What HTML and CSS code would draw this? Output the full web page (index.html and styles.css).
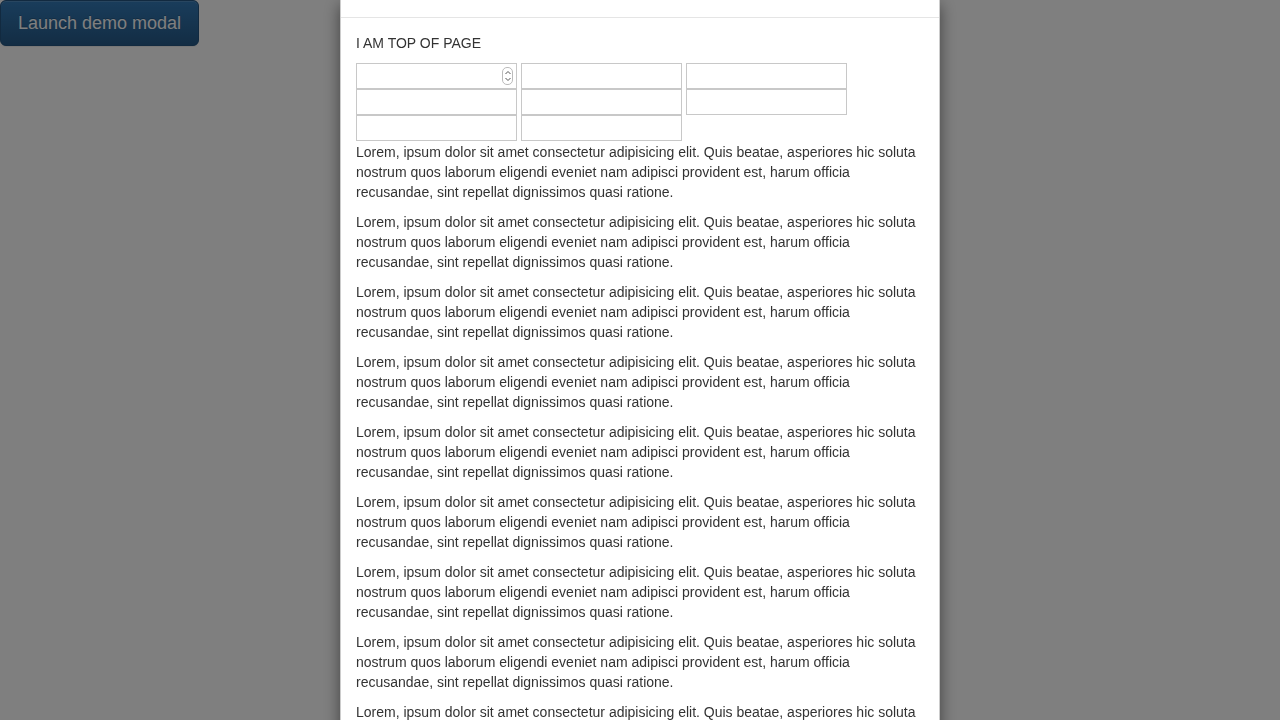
FILE: index.html
```html
<!DOCTYPE html>
<html lang="en">
<head>
<meta charset="utf-8">
<title>Modal demo</title>
<link rel="stylesheet" href="styles.css">
</head>
<body>
<button class="btn-launch" type="button">Launch demo modal</button>
<div class="backdrop"></div>
<div class="modal">
  <div class="modal-dialog">
    <div class="modal-content">
      <div class="modal-header"></div>
      <div class="modal-body">
        <p class="top">I AM TOP OF PAGE</p>
        <div class="fields">
          <div class="col">
            <div class="num-wrap">
              <input class="field" type="text">
              <span class="spin"><svg width="8" height="16" viewBox="0 0 8 16"><path d="M1.5 6 L4 3.5 L6.5 6" fill="none" stroke="#555" stroke-width="1"/><path d="M1.5 10 L4 12.5 L6.5 10" fill="none" stroke="#555" stroke-width="1"/></svg></span>
            </div>
            <input class="field" type="text">
            <input class="field" type="text">
          </div>
          <div class="col">
            <input class="field" type="text">
            <input class="field" type="text">
            <input class="field" type="text">
          </div>
          <div class="col">
            <input class="field" type="text">
            <input class="field" type="text">
          </div>
        </div>
        <p>Lorem, ipsum dolor sit amet consectetur adipisicing elit. Quis beatae, asperiores hic soluta nostrum quos laborum eligendi eveniet nam adipisci provident est, harum officia recusandae, sint repellat dignissimos quasi ratione.</p>
        <p>Lorem, ipsum dolor sit amet consectetur adipisicing elit. Quis beatae, asperiores hic soluta nostrum quos laborum eligendi eveniet nam adipisci provident est, harum officia recusandae, sint repellat dignissimos quasi ratione.</p>
        <p>Lorem, ipsum dolor sit amet consectetur adipisicing elit. Quis beatae, asperiores hic soluta nostrum quos laborum eligendi eveniet nam adipisci provident est, harum officia recusandae, sint repellat dignissimos quasi ratione.</p>
        <p>Lorem, ipsum dolor sit amet consectetur adipisicing elit. Quis beatae, asperiores hic soluta nostrum quos laborum eligendi eveniet nam adipisci provident est, harum officia recusandae, sint repellat dignissimos quasi ratione.</p>
        <p>Lorem, ipsum dolor sit amet consectetur adipisicing elit. Quis beatae, asperiores hic soluta nostrum quos laborum eligendi eveniet nam adipisci provident est, harum officia recusandae, sint repellat dignissimos quasi ratione.</p>
        <p>Lorem, ipsum dolor sit amet consectetur adipisicing elit. Quis beatae, asperiores hic soluta nostrum quos laborum eligendi eveniet nam adipisci provident est, harum officia recusandae, sint repellat dignissimos quasi ratione.</p>
        <p>Lorem, ipsum dolor sit amet consectetur adipisicing elit. Quis beatae, asperiores hic soluta nostrum quos laborum eligendi eveniet nam adipisci provident est, harum officia recusandae, sint repellat dignissimos quasi ratione.</p>
        <p>Lorem, ipsum dolor sit amet consectetur adipisicing elit. Quis beatae, asperiores hic soluta nostrum quos laborum eligendi eveniet nam adipisci provident est, harum officia recusandae, sint repellat dignissimos quasi ratione.</p>
        <p>Lorem, ipsum dolor sit amet consectetur adipisicing elit. Quis beatae, asperiores hic soluta nostrum quos laborum eligendi eveniet nam adipisci provident est, harum officia recusandae, sint repellat dignissimos quasi ratione.</p>
        <p>Lorem, ipsum dolor sit amet consectetur adipisicing elit. Quis beatae, asperiores hic soluta nostrum quos laborum eligendi eveniet nam adipisci provident est, harum officia recusandae, sint repellat dignissimos quasi ratione.</p>
      </div>
    </div>
  </div>
</div>
</body>
</html>
```

FILE: styles.css
```css
* { box-sizing: border-box; }
html, body {
  margin: 0;
  height: 100%;
  overflow: hidden;
}
body {
  font-family: "Liberation Sans", Arial, sans-serif;
  font-size: 14px;
  line-height: 20px;
  color: #333;
  background: #fff;
}
.btn-launch {
  display: block;
  margin: 0;
  width: 199px;
  height: 46px;
  padding: 10px 16px;
  font-family: "Liberation Sans", Arial, sans-serif;
  font-size: 18px;
  line-height: 24px;
  color: #fff;
  text-shadow: 0 -1px 0 rgba(0,0,0,.2);
  background-color: #2e6da4;
  background-image: linear-gradient(to bottom, #337ab7 0, #265a88 100%);
  border: 1px solid #245580;
  border-radius: 6px;
  box-shadow: inset 0 1px 0 rgba(255,255,255,.15), 0 1px 1px rgba(0,0,0,.075);
}
.backdrop {
  position: fixed;
  inset: 0;
  background: rgba(0,0,0,.5);
}
.modal {
  position: fixed;
  inset: 0;
  overflow: hidden;
}
.modal-dialog {
  width: 600px;
  margin: 0 auto;
}
.modal-content {
  background: #fff;
  border: 1px solid rgba(0,0,0,.2);
  border-top: 0;
  box-shadow: 0 5px 15px rgba(0,0,0,.5);
}
.modal-header {
  height: 18px;
  border-bottom: 1px solid #e5e5e5;
}
.modal-body {
  padding: 15px;
}
p {
  margin: 0 0 10px;
}
.top {
  margin: 0 0 10px;
}
.fields {
  display: flex;
  gap: 4px;
  align-items: flex-start;
  margin-bottom: 1px;
}
.col {
  display: flex;
  flex-direction: column;
  width: 161px;
}
.field {
  display: block;
  width: 161px;
  height: 26px;
  margin: 0;
  padding: 2px 4px;
  border: 1px solid #c8c8c8;
  background: #fff;
  font-family: "Liberation Sans", Arial, sans-serif;
  font-size: 13px;
  outline: none;
}
.num-wrap {
  position: relative;
  width: 161px;
  height: 26px;
}
.spin {
  position: absolute;
  right: 4px;
  top: 4px;
  width: 11px;
  height: 18px;
  border: 1px solid #bbb;
  border-radius: 5px;
  background: #fff;
  display: flex;
  align-items: center;
  justify-content: center;
}
.spin svg { display: block; }
```
